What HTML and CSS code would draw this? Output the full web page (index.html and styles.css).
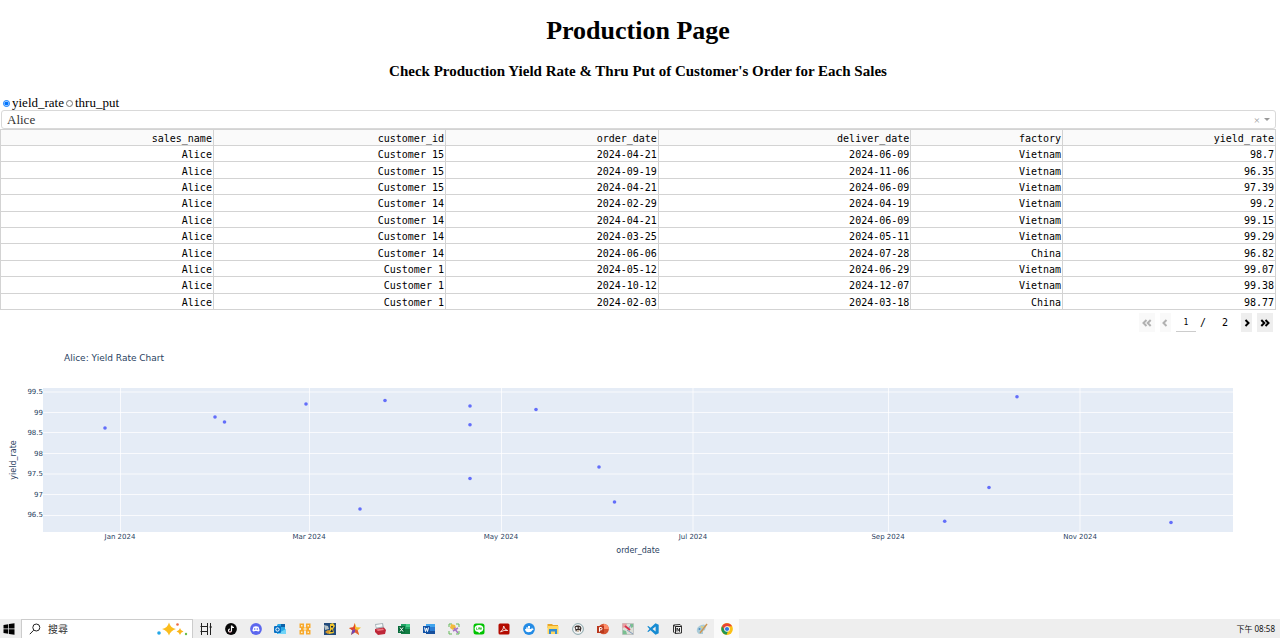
FILE: index.html
```html
<!DOCTYPE html>
<html lang="en">
<head>
<meta charset="utf-8">
<title>Production Page</title>
<link rel="stylesheet" href="styles.css">
</head>
<body>
<main class="page">
  <h1 class="title">Production Page</h1>
  <h2 class="subtitle">Check Production Yield Rate &amp; Thru Put of Customer's Order for Each Sales</h2>
  <div class="metrics">
    <label class="metric"><input type="radio" name="metric" checked>yield_rate</label>
    <label class="metric"><input type="radio" name="metric">thru_put</label>
  </div>
  <div class="picker">
    <select class="picker-select" aria-label="Sales name"><option>Alice</option></select>
    <div class="picker-tools">
      <button class="clear" aria-label="Clear">×</button>
      <span class="caret"></span>
    </div>
  </div>
  <table class="orders">
    <colgroup><col class="c-sales"><col class="c-customer"><col class="c-order"><col class="c-deliver"><col class="c-factory"><col class="c-rate"></colgroup>
    <thead><tr><th>sales_name</th><th>customer_id</th><th>order_date</th><th>deliver_date</th><th>factory</th><th>yield_rate</th></tr></thead>
    <tbody>
      <tr><td>Alice</td><td>Customer 15</td><td>2024-04-21</td><td>2024-06-09</td><td>Vietnam</td><td>98.7</td></tr>
      <tr><td>Alice</td><td>Customer 15</td><td>2024-09-19</td><td>2024-11-06</td><td>Vietnam</td><td>96.35</td></tr>
      <tr><td>Alice</td><td>Customer 15</td><td>2024-04-21</td><td>2024-06-09</td><td>Vietnam</td><td>97.39</td></tr>
      <tr><td>Alice</td><td>Customer 14</td><td>2024-02-29</td><td>2024-04-19</td><td>Vietnam</td><td>99.2</td></tr>
      <tr><td>Alice</td><td>Customer 14</td><td>2024-04-21</td><td>2024-06-09</td><td>Vietnam</td><td>99.15</td></tr>
      <tr><td>Alice</td><td>Customer 14</td><td>2024-03-25</td><td>2024-05-11</td><td>Vietnam</td><td>99.29</td></tr>
      <tr><td>Alice</td><td>Customer 14</td><td>2024-06-06</td><td>2024-07-28</td><td>China</td><td>96.82</td></tr>
      <tr><td>Alice</td><td>Customer 1</td><td>2024-05-12</td><td>2024-06-29</td><td>Vietnam</td><td>99.07</td></tr>
      <tr><td>Alice</td><td>Customer 1</td><td>2024-10-12</td><td>2024-12-07</td><td>Vietnam</td><td>99.38</td></tr>
      <tr><td>Alice</td><td>Customer 1</td><td>2024-02-03</td><td>2024-03-18</td><td>China</td><td>98.77</td></tr>
    </tbody>
  </table>
  <nav class="pager" aria-label="Table pages">
    <button class="page-btn wide" disabled aria-label="First page"><svg width="10" height="8" viewBox="0 0 10 8"><path d="M4.5 1 1.5 4l3 3M8.700 1l-3 3 3 3"/></svg></button>
    <button class="page-btn" disabled aria-label="Previous page"><svg width="6" height="8" viewBox="0 0 6 8"><path d="M4.500 1l-3 3 3 3"/></svg></button>
    <div class="page-number">
      <input class="page-input" aria-label="Current page" value="1">
      <span>/</span>
      <span class="page-last">2</span>
    </div>
    <button class="page-btn" aria-label="Next page"><svg width="6" height="8" viewBox="0 0 6 8"><path d="M1.500 1l3 3-3 3"/></svg></button>
    <button class="page-btn wide" aria-label="Last page"><svg width="10" height="8" viewBox="0 0 10 8"><path d="M1.300 1l3 3-3 3M5.500 1l3 3-3 3"/></svg></button>
  </nav>
  <svg class="chart" viewBox="0 0 1280 240" role="img" aria-label="Alice: Yield Rate Chart">
    <text class="chart-title" x="64" y="29">Alice: Yield Rate Chart</text>
    <rect class="plot" x="43" y="56" width="1190" height="144"/>
    <path class="grid" d="M43 60H1233M43 80.500H1233M43 100.500H1233M43 121.500H1233M43 142H1233M43 162.500H1233M43 183.500H1233M120.500 56V200M309.500 56V200M501.500 56V200M693 56V200M888.500 56V200M1080 56V200"/>
    <g class="tick tick-y">
      <text x="43" y="62">99.5</text><text x="43" y="83">99</text><text x="43" y="103">98.5</text><text x="43" y="124">98</text><text x="43" y="144">97.5</text><text x="43" y="165">97</text><text x="43" y="185">96.5</text>
    </g>
    <g class="tick tick-x">
      <text x="120" y="207">Jan 2024</text><text x="309" y="207">Mar 2024</text><text x="501" y="207">May 2024</text><text x="693" y="207">Jul 2024</text><text x="888" y="207">Sep 2024</text><text x="1080" y="207">Nov 2024</text>
    </g>
    <text class="axis" x="638" y="221">order_date</text>
    <text class="axis" transform="translate(16 128) rotate(-90)">yield_rate</text>
    <g class="points">
      <circle cx="105" cy="96" r="1.800"/><circle cx="215" cy="85" r="1.800"/><circle cx="224.500" cy="90" r="1.800"/><circle cx="306" cy="72" r="1.800"/><circle cx="360" cy="177" r="1.800"/><circle cx="385" cy="68.500" r="1.800"/><circle cx="470" cy="74" r="1.800"/><circle cx="470" cy="92.800" r="1.800"/><circle cx="470" cy="146.500" r="1.800"/><circle cx="536" cy="77.500" r="1.800"/><circle cx="599" cy="135" r="1.800"/><circle cx="614.500" cy="170" r="1.800"/><circle cx="944.700" cy="189.300" r="1.800"/><circle cx="989" cy="155.500" r="1.800"/><circle cx="1017" cy="64.700" r="1.800"/><circle cx="1171" cy="190.500" r="1.800"/>
    </g>
  </svg>
</main>
<footer class="taskbar">
  <button class="start" aria-label="Start"><svg width="12" height="12" viewBox="0 0 12 12"><path d="M.5 2 5.300 1.200V5.600H.5zM6 1.100 11.500.3V5.600H6zM.5 6.300H5.300V10.800L.5 10zM6 6.300H11.500V11.700L6 10.900z"/></svg></button>
  <label class="search">
    <svg width="12" height="12" viewBox="0 0 12 12" fill="none" stroke="#222"><circle cx="7.300" cy="4.500" r="3.500"/><path d="M4.700 7.200.8 11.200"/></svg>
    <input class="search-input" placeholder="搜尋" aria-label="搜尋">
    <svg width="32" height="14" viewBox="0 0 32 14"><path fill="#fbbd1d" d="M13 .5Q14.500 6 20 7 14.500 8.500 13 13.500 11.500 8.500 6 7 11.500 6 13 .5z"/><path fill="#f9b51b" d="M24 6Q24.600 9 27.500 9.500 24.600 10.200 24 13 23.300 10.200 20.500 9.500 23.300 9 24 6z"/><circle cx="3" cy="11" r="1.800" fill="#24a7e8"/><circle cx="21.500" cy="2.500" r="1.300" fill="#ef6b42"/><circle cx="30" cy="12" r="1.200" fill="#69bd4b"/></svg>
  </label>
  <div class="apps">
    <button class="app" aria-label="Task view"><svg viewBox="0 0 12 12"><path fill="none" stroke="#222" d="M.5 3.500H8M.5 8.500H8M1.500 0V12M7.500 0V12M10.500 0V12M9.500 4H12"/></svg></button>
    <button class="app" aria-label="TikTok"><svg viewBox="0 0 12 12"><circle cx="6" cy="6" r="5.900" fill="#080808"/><path d="M6.500 2.500V7.500A1.500 1.500 0 1 1 5 6M6.500 2.500Q7 4.500 9 4.500" fill="none" stroke="#fff" stroke-width="1.200"/><path d="M3.800 8.800Q5 9.800 6.500 8.800" fill="none" stroke="#e9476b" stroke-width=".5"/></svg></button>
    <button class="app" aria-label="Discord"><svg viewBox="0 0 12 12"><circle cx="6" cy="6" r="5.900" fill="#5c67ee"/><path fill="#fff" d="M3.500 3.700Q6 2.900 8.500 3.700L9.700 7.500 8 8.800 7.400 8H4.600L4 8.800 2.300 7.500z"/><circle cx="4.700" cy="6" r=".8" fill="#5c67ee"/><circle cx="7.300" cy="6" r=".8" fill="#5c67ee"/></svg></button>
    <button class="app" aria-label="Outlook"><svg viewBox="0 0 12 12"><path fill="#28a8e5" d="M4 1H11V6L12 7V11H3V2z"/><path fill="#0d61a8" d="M7 1H11V4H7z"/><path fill="#71d4f7" d="M3 11 12 6V11z"/><rect y="3" width="7" height="7" rx="1" fill="#0871c5"/><circle cx="3.500" cy="6.500" r="1.700" fill="none" stroke="#fff"/></svg></button>
    <button class="app" aria-label="Connections"><svg viewBox="0 0 12 12"><path fill="#f7a92d" d="M.5.5H5V4.500H7V.5H11.500V5H10V7H11.500V11.500H7V7.500H5V11.500H.5V7H2V5H.5z"/><path fill="#fff0ca" d="M2 2H3.500V3.500H2zM8.500 2H10V3.500H8.500zM2 8.500H3.500V10H2zM8.500 8.500H10V10H8.500zM4.500 5.200H7.500V6.800H4.500z"/></svg></button>
    <button class="app" aria-label="Python game"><svg viewBox="0 0 12 12"><path fill="#234b7b" d="M0 0H12V12H0z"/><path fill="#efc32e" d="M6 1 9 0 11 3 9 6 10 10 5 11 3 9 6 7z"/><path fill="#b9c4c5" d="M0 2 4 3 5 6 1 7z"/><path fill="#d7982b" d="M1 9 4 7 6 8 4 11z"/><path fill="#162942" d="M7 3H9V4.500H7zM8 6 9 9 6 9z"/></svg></button>
    <button class="app" aria-label="Star"><svg viewBox="0 0 12 12"><path fill="#f6bd25" d="M5.800 0 7.500 4.200 12 4.500 8.700 7.300 10 12 6 9.300 2 12 3.200 7.300 0 5 4.300 4.200z"/><path fill="#dd3e35" d="M0 5 4.300 4.200 5.800 0 6 6 3.200 7.300z"/><path fill="#7544ae" d="M6 6 6 9.300 2 12 3.200 7.300z"/><path fill="#e25a37" d="M6 6 8.700 7.300 10 12 6 9.300z"/></svg></button>
    <button class="app" aria-label="Toolbox"><svg viewBox="0 0 12 12"><path fill="#a8b4b9" d="M1 1 9 0 10 5 2 6z"/><path fill="#f6f8f9" d="M2 2 8 1 8.500 3.500 2.500 4.500z"/><path fill="#be2738" d="M1 6 10 4.500 12 7 11 11 4 12 1 9z"/><path fill="#ee7982" d="M2 6.500 9 5.500 10 7 4 8z"/></svg></button>
    <button class="app" aria-label="Excel"><svg viewBox="0 0 12 12"><path fill="#21a366" d="M3 1H12V11H3z"/><path fill="#107c41" d="M3 6H12V11H3z"/><path fill="#45ce88" d="M8 1H12V4H8z"/><rect y="3" width="7" height="7" fill="#086c3b"/><path d="M2 4.500 5 8.500M5 4.500 2 8.500" stroke="#fff"/></svg></button>
    <button class="app" aria-label="Word"><svg viewBox="0 0 12 12"><path fill="#2b7cd3" d="M3 1H12V11H3z"/><path fill="#41a5ee" d="M3 1H12V4H3z"/><path fill="#174f9b" d="M3 8H12V11H3z"/><rect y="3" width="7" height="7" fill="#1254a8"/><path d="M1.500 4.500 2.500 8.500 3.500 5 4.500 8.500 5.500 4.500" stroke="#fff" fill="none"/></svg></button>
    <button class="app" aria-label="Snip"><svg viewBox="0 0 12 12"><path d="M1 4V1H4M8 1H11V4M1 8V11H4M8 11H11V8" stroke="#65b95a" fill="none"/><path fill="#f1ba3b" d="M3 1 7 2 8 5 5 7 2 5z"/><path d="M5 8 10 5M6 5 10 10" stroke="#a774c5" stroke-width="1.500"/></svg></button>
    <button class="app" aria-label="LINE"><svg viewBox="0 0 12 12"><rect x=".5" y=".5" width="11" height="11" rx="2.500" fill="#00c300"/><ellipse cx="6" cy="5.500" rx="4.300" ry="3.500" fill="#fff"/><path fill="#fff" d="M5 8 9 7 6 10.500z"/><path d="M3.500 4.500V6.500H4.700M5.500 4.500V6.500M6.500 6.500V4.500L7.500 6.500V4.500M8.500 4.500V6.500" stroke="#00b400" stroke-width=".6" fill="none"/></svg></button>
    <button class="app" aria-label="Acrobat"><svg viewBox="0 0 12 12"><rect x=".5" y=".5" width="11" height="11" rx="1.500" fill="#b30b00"/><path d="M2.500 9Q6 6 5.700 3 6.500 7 9.700 7.500 6 6.700 2.500 9z" stroke="#fff" stroke-width=".8" fill="none"/></svg></button>
    <button class="app" aria-label="Docker"><svg viewBox="0 0 12 12"><circle cx="6" cy="6" r="5.900" fill="#238be5"/><path fill="#fff" d="M2 6H8.300L9 4.500 9.700 5.700 11 6 9.600 6.900Q8.500 9.300 5.500 9.300 2.400 9.200 2 6zM3 4.500H7V5.700H3zM5 3H7V4.500H5z"/></svg></button>
    <button class="app" aria-label="File Explorer"><svg viewBox="0 0 12 12"><path fill="#e9a526" d="M.5 1H5L6 2H11V5H.5z"/><path fill="#ffd75e" d="M.5 3H11.500V11H.5z"/><path fill="#338dd5" d="M2 6H10V11H8V8.500H4V11H2z"/></svg></button>
    <button class="app" aria-label="DBeaver"><svg viewBox="0 0 12 12"><circle cx="6" cy="6" r="5.400" fill="#f4f4f4" stroke="#6b9197" stroke-width=".8"/><path fill="#392d2a" d="M2.500 4Q3 2 6 2.500 9 2 9.500 5L8.500 9 7.500 7 5 7 4 9z"/><circle cx="4.700" cy="5" r="1.100" fill="#fff"/><circle cx="7.400" cy="5" r=".8" fill="#fff"/><path fill="#cabaa5" d="M5 7H7V9H5z"/></svg></button>
    <button class="app" aria-label="PowerPoint"><svg viewBox="0 0 12 12"><circle cx="6.700" cy="6" r="5.200" fill="#d35230"/><path fill="#ff8f6b" d="M6.700.8A5.200 5.200 0 0 1 11.900 6H6.700z"/><rect y="3" width="7" height="7" fill="#b9381d"/><path d="M2.500 8.700V4.500H4Q5 4.500 5 5.700T4 6.900H2.500" stroke="#fff" fill="none"/></svg></button>
    <button class="app" aria-label="Map"><svg viewBox="0 0 12 12"><path fill="#dcdfd8" stroke="#a0a5a5" stroke-width=".5" d="M.5.5H11.500V11.500H.5z"/><path fill="#ea9da1" d="M.5.5H5L4 4 .5 5z"/><path fill="#7abf91" d="M.8 7 4 8 5 11.200H.8zM8 1H11.200V4L9 5z"/><path d="M5 7 11 11M9 2 6 6" stroke="#8098bb"/><path d="M3 3 8 7" stroke="#d8304b" stroke-width="2"/></svg></button>
    <button class="app" aria-label="VS Code"><svg viewBox="0 0 12 12"><path fill="#168bd2" fill-rule="evenodd" d="M8.500.3 11.700 1.800V10.200L8.500 11.700 3.500 7.300 1.300 9 .3 8.400 2.500 6 .3 3.600 1.300 3 3.500 4.700zM8.600 3.500 5.500 6 8.600 8.500z"/></svg></button>
    <button class="app" aria-label="Notion"><svg viewBox="0 0 12 12"><path fill="#eee" stroke="#333" d="M2.500 2 9 1.500 10.500 3V10L4 10.500 2.500 9z"/><path d="M3 2.500 4.500 3.500H10M4.500 3.500V10M6 8.500V5L8.500 8.500V5" stroke="#222" fill="none"/></svg></button>
    <button class="app" aria-label="Paint"><svg viewBox="0 0 12 12"><path fill="#a9cbd9" d="M1 6Q2 2 8 1.500L10 3 9 7 7 8 7 11 3 11Q0 9 1 6z"/><path d="M4 10 11 1" stroke="#cf9550" stroke-width="1.400"/><circle cx="3.500" cy="6" r="1" fill="#4d8bc2"/><circle cx="6" cy="4" r="1" fill="#e7d06c"/></svg></button>
    <button class="app active" aria-label="Chrome"><svg viewBox="0 0 12 12"><circle cx="6" cy="6" r="5.900" fill="#fbc116"/><path fill="#ea4335" d="M1 3.200A5.700 5.700 0 0 1 11 3.200H6L3.500 7.300z"/><path fill="#219653" d="M1 3.200 4 7.500 7 8 5.500 11.800A5.900 5.900 0 0 1 1 3.200z"/><circle cx="6" cy="6" r="2.800" fill="#fff"/><circle cx="6" cy="6" r="2.100" fill="#3478df"/></svg></button>
  </div>
  <time class="clock">下午 08:58</time>
</footer>
</body>
</html>
```
FILE: styles.css
```css
* { box-sizing: border-box; }
body {
  margin: 0;
  min-height: 100vh;
  display: flex;
  flex-direction: column;
  background: #fff;
  color: #000;
  font-family: "Liberation Serif", serif;
}
button, input, select { margin: 0; padding: 0; border: 0; background: none; font: inherit; color: inherit; }
.page { flex: 1; }
.title { margin: 16px 4px 0 0; font-size: 26px; line-height: 30px; text-align: center; }
.subtitle { margin: 16px 4px 16px 0; font-size: 15px; line-height: 18px; text-align: center; }
.metrics { display: flex; gap: 2px; padding-left: 3px; font-size: 13px; line-height: 14px; }
.metric { display: flex; align-items: center; gap: 2px; }
.metric input { width: 7px; height: 7px; }

.picker { position: relative; margin: 0 4px 0 1px; }
.picker-select {
  display: block;
  width: 100%;
  height: 19px;
  padding-left: 5px;
  border: 1px solid #d9d9d9;
  border-radius: 3px;
  appearance: none;
  background: #fff;
  color: #333;
  font-size: 13px;
}
.picker-tools { position: absolute; top: 0; bottom: 0; right: 6px; display: flex; align-items: center; gap: 4px; }
.clear { color: #999; font-size: 11px; line-height: 12px; }
.caret { border: 3px solid transparent; border-top-color: #999; border-bottom: 0; }

.orders {
  width: calc(100% - 4px);
  height: 181px;
  border-collapse: collapse;
  table-layout: fixed;
  font: 10px/13px "DejaVu Sans Mono", monospace;
  text-align: right;
}
.orders th, .orders td { padding: 2px 1px 0; border: 1px solid #d3d3d3; font-weight: 400; }
.orders th { background: #fafafa; }
.c-sales, .c-rate { width: 16.7%; }
.c-customer { width: 18.2%; }
.c-order { width: 16.7%; }
.c-deliver { width: 19.8%; }
.c-factory { width: 11.9%; }

.pager { display: flex; justify-content: flex-end; gap: 5px; padding: 3px 7px 0 0; font: 10px/19px "DejaVu Sans Mono", monospace; }
.page-btn { display: flex; align-items: center; justify-content: center; width: 11px; height: 19px; background: #eee; }
.page-btn.wide { width: 16px; }
.page-btn:disabled { opacity: .3; }
.page-btn path { fill: none; stroke: #000; stroke-width: 2; }
.page-number { display: flex; align-items: center; gap: 4px; }
.page-input { width: 20px; height: 18px; border-bottom: 1px solid #ccc; font-size: 8px; text-align: center; }
.page-last { padding: 0 8px 0 12px; }

.chart { display: block; width: 100%; font-family: "DejaVu Sans", sans-serif; fill: #2a3f5f; }
.chart-title { font-size: 9px; }
.plot { fill: #e5ecf6; }
.grid { fill: none; stroke: #fff; stroke-opacity: .75; }
.tick { font-size: 7px; }
.tick-y { text-anchor: end; }
.tick-x, .axis { text-anchor: middle; }
.axis { font-size: 8px; }
.points { fill: #636efa; }

.taskbar { display: flex; align-items: stretch; height: 19px; background: #eee; font-family: "Noto Sans", "Noto Sans CJK TC", sans-serif; }
.start { width: 21px; padding-left: 3px; display: flex; align-items: center; }
.search { display: flex; align-items: center; width: 172px; padding: 0 4px 0 7px; background: #fff; border: 1px solid #ccc; border-bottom: 0; }
.search-input { flex: 1; min-width: 0; padding-left: 7px; font-size: 10px; line-height: 16px; outline: 0; }
.search-input::placeholder { color: #333; }
.apps { display: grid; grid-template-columns: repeat(22, 1fr); width: 546px; }
.app { display: flex; align-items: center; justify-content: center; padding: 1px 0 0 1px; }
.app svg { width: 12px; height: 12px; }
.app.active { background: #fafafa; }
.clock { margin-left: auto; padding-right: 5px; font-size: 8px; line-height: 20px; color: #111; }
```
